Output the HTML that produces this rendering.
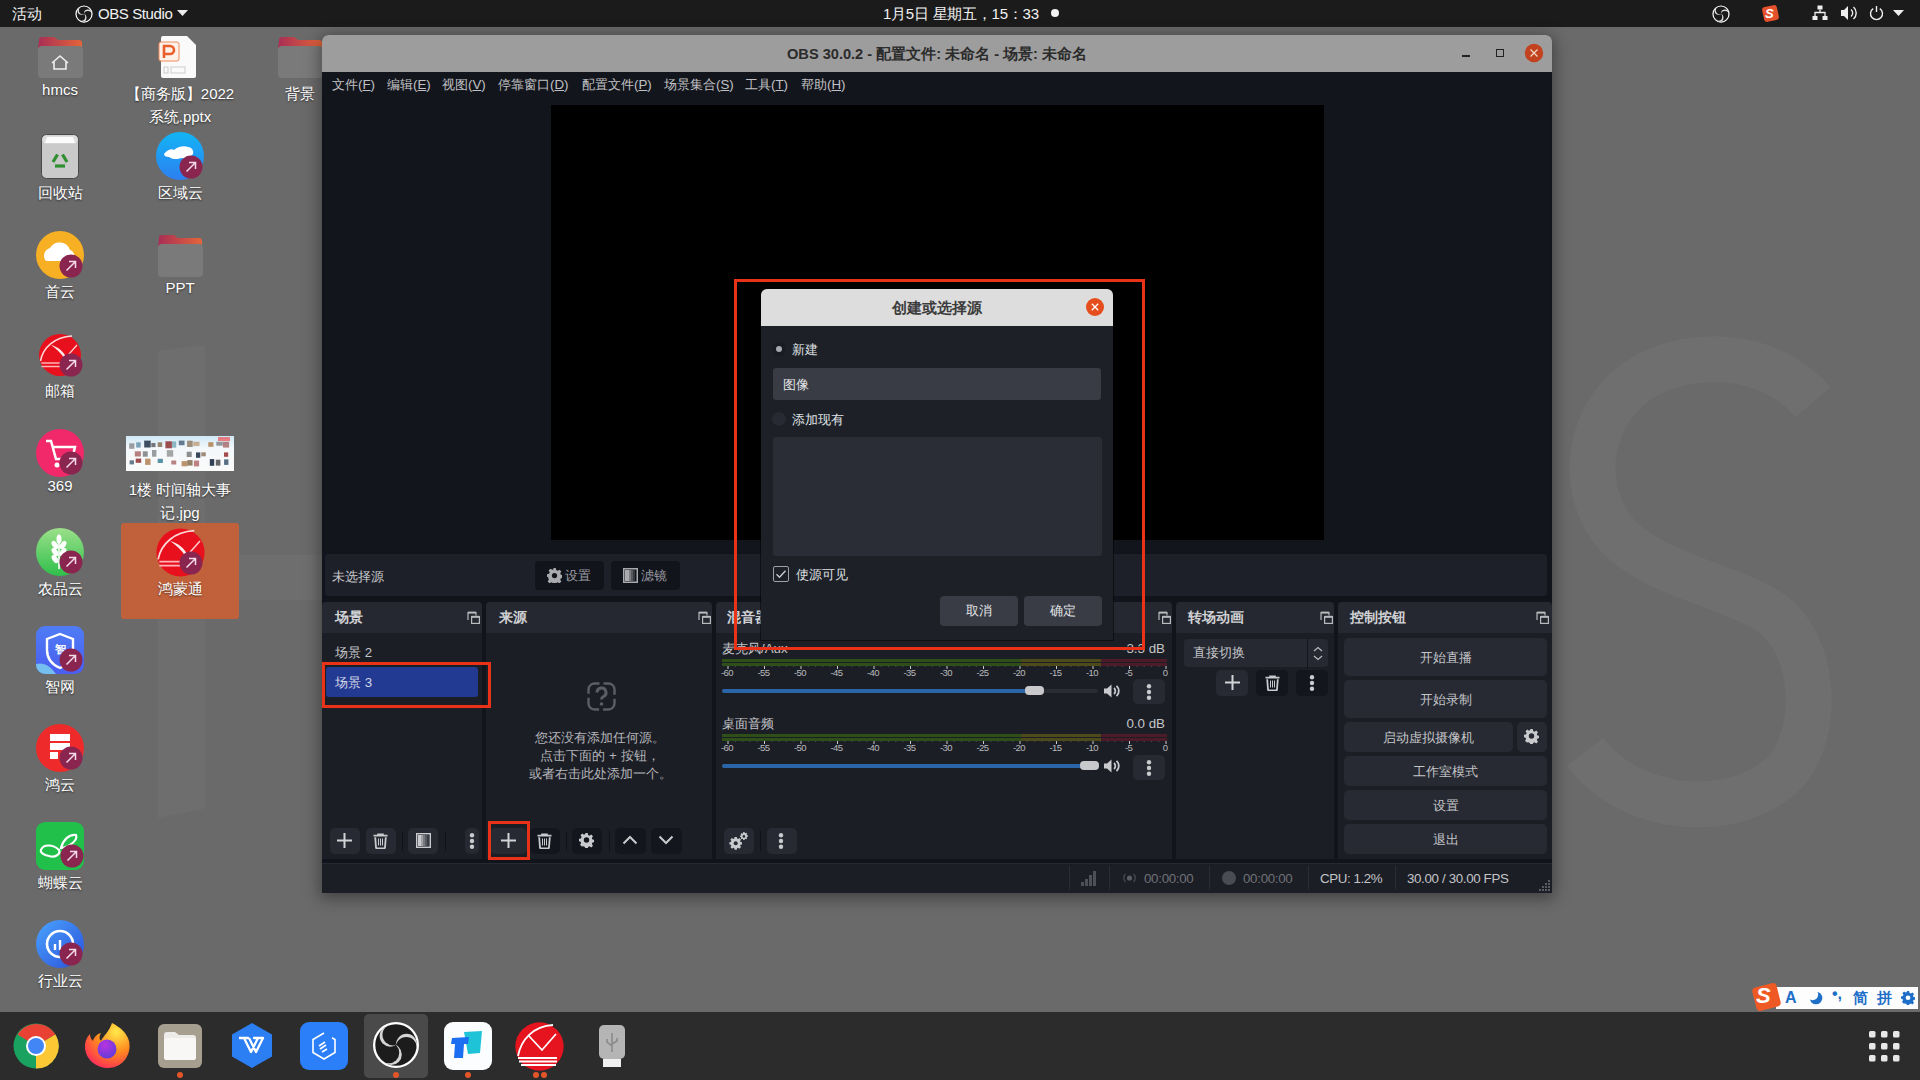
<!DOCTYPE html>
<html><head><meta charset="utf-8">
<style>
*{box-sizing:border-box;margin:0;padding:0}
html,body{width:1920px;height:1080px;overflow:hidden}
body{position:relative;background:#6a6a6a;font-family:"Liberation Sans",sans-serif;color:#fff}
.a{position:absolute}
.t{position:absolute;white-space:nowrap;line-height:1}
#top{left:0;top:0;width:1920px;height:27px;background:#1b1b1b}
.dl{position:absolute;white-space:nowrap;font-size:15px;line-height:23px;color:#fff;text-align:center;text-shadow:0 1px 2px rgba(0,0,0,.6)}
.ui{font-size:13.33px;color:#c9cacd}
.hdr{position:absolute;background:#252830}
.body{position:absolute;background:#1c1e26}
.btn{position:absolute;background:#282b34;border-radius:4px}
.rb{position:absolute;border:3px solid #e8321c}
u{text-decoration:underline;text-underline-offset:1px}
</style></head>
<body>
<!-- WALLPAPER LETTERS -->
<div class="a" style="left:158px;top:345px;width:47px;height:473px;background:#6e6e6e;clip-path:polygon(0 1.2%,100% 0,100% 98%,0 100%)"></div>
<div class="a" style="left:205px;top:555px;width:120px;height:45px;background:#6e6e6e"></div>
<svg class="a" style="left:1555px;top:330px" width="300" height="510" viewBox="0 0 300 510"><path d="M258 72 C215 22 140 20 92 45 C30 80 22 160 62 205 C97 243 170 255 212 280 C262 312 265 400 232 440 C185 490 80 487 30 422" fill="none" stroke="#6f6f6f" stroke-width="46"/></svg>

<!-- DESKTOP ICONS col1 -->
<svg class="a" style="left:37px;top:36px" width="46" height="42" viewBox="0 0 46 42"><defs><linearGradient id="fg" x1="0" x2="1"><stop offset="0" stop-color="#a82e55"/><stop offset="1" stop-color="#e3653a"/></linearGradient></defs><path d="M2 4a3 3 0 0 1 3-3h12l4 3h21a3 3 0 0 1 3 3v6H1z" fill="url(#fg)"/><rect x="1" y="10" width="45" height="32" rx="4" fill="#7a7a7a"/><path d="M15 27l8-7 8 7M17 25v8h12v-8" fill="none" stroke="#eee" stroke-width="1.6"/></svg>
<div class="dl" style="left:0;width:120px;top:78px">hmcs</div>

<svg class="a" style="left:41px;top:134px" width="38" height="45" viewBox="0 0 38 45"><rect x="0.5" y="0.5" width="37" height="44" rx="5" fill="#cacaca" stroke="#4a4a4a" stroke-width="1"/><rect x="1.5" y="1.5" width="35" height="8" rx="4" fill="#dedede"/><path d="M6 3h26l2 6H4z" fill="#fbfbfb"/><g fill="none" stroke="#2f8f2f" stroke-width="3.2" stroke-linejoin="round"><path d="M16.5 20.5l-4.5 7.5"/><path d="M21.5 20.5l4.5 7.5"/><path d="M14 32h10"/></g></svg>
<div class="dl" style="left:0;width:120px;top:181px">回收站</div>

<svg class="a" style="left:36px;top:231px" width="50" height="50" viewBox="0 0 50 50"><circle cx="24" cy="24" r="24" fill="#f7b024"/><path d="M10 30a8 8 0 0 1 4-13 11 11 0 0 1 20 2 6 6 0 0 1 1 11z" fill="#fff"/></svg>
<div class="dl" style="left:0;width:120px;top:280px">首云</div>

<svg class="a" style="left:36px;top:331px" width="48" height="48" viewBox="0 0 48 48"><circle cx="24" cy="24" r="21" fill="#e8101c"/><path d="M4.5 30C7 16 19 6 36 5" fill="none" stroke="#ffd9da" stroke-width="1.5"/><path d="M15 14C22 16 27 20 30.5 26.5L28.5 27.5C25 22 20.5 18 15 14z" fill="#ffe9e9"/><path d="M30 26.5L41 14" stroke="#ffd0d0" stroke-width="1.3"/><path d="M5.5 32h21M5.5 35.5h21" stroke="#ffb5b8" stroke-width="1.6"/></svg>
<div class="dl" style="left:0;width:120px;top:379px">邮箱</div>

<svg class="a" style="left:36px;top:429px" width="50" height="50" viewBox="0 0 50 50"><circle cx="24" cy="24" r="24" fill="#f1286a"/><path d="M10 12h5l5 18h16l3-12H17" fill="none" stroke="#fff" stroke-width="2.5"/><circle cx="21" cy="36" r="2.5" fill="#fff"/></svg>
<div class="dl" style="left:0;width:120px;top:474px">369</div>

<svg class="a" style="left:36px;top:528px" width="50" height="50" viewBox="0 0 50 50"><defs><linearGradient id="gg" x1="0" y1="0" x2="0" y2="1"><stop offset="0" stop-color="#9be08a"/><stop offset="1" stop-color="#2fbf4a"/></linearGradient></defs><circle cx="24" cy="24" r="24" fill="url(#gg)"/><g fill="#fff"><path d="M23 41V12" stroke="#fff" stroke-width="1.6"/><ellipse cx="23" cy="11" rx="2.5" ry="4.5"/><ellipse cx="19" cy="17" rx="2.6" ry="4.6" transform="rotate(-35 19 17)"/><ellipse cx="27" cy="17" rx="2.6" ry="4.6" transform="rotate(35 27 17)"/><ellipse cx="19" cy="24" rx="2.6" ry="4.6" transform="rotate(-35 19 24)"/><ellipse cx="27" cy="24" rx="2.6" ry="4.6" transform="rotate(35 27 24)"/><ellipse cx="19" cy="31" rx="2.6" ry="4.6" transform="rotate(-35 19 31)"/></g></svg>
<div class="dl" style="left:0;width:120px;top:577px">农品云</div>

<svg class="a" style="left:36px;top:626px" width="50" height="50" viewBox="0 0 50 50"><defs><linearGradient id="zw" x1="0" y1="0" x2="0" y2="1"><stop offset="0" stop-color="#4f7cf5"/><stop offset="1" stop-color="#4a5ef0"/></linearGradient></defs><rect x="0" y="0" width="48" height="48" rx="9" fill="url(#zw)"/><path d="M0 38c8-2 14 2 20 10H9a9 9 0 0 1-9-9z" fill="#7fd6f0" opacity=".8"/><path d="M24 8l13 5v11c0 9-6 15-13 18-7-3-13-9-13-18V13z" fill="none" stroke="#fff" stroke-width="2.4"/><text x="24" y="27" font-size="11" fill="#fff" text-anchor="middle" font-weight="bold">智</text></svg>
<div class="dl" style="left:0;width:120px;top:675px">智网</div>

<svg class="a" style="left:36px;top:724px" width="50" height="50" viewBox="0 0 50 50"><circle cx="24" cy="24" r="24" fill="#ef2a2a"/><rect x="14" y="10" width="20" height="7" fill="#fff"/><rect x="14" y="19" width="20" height="7" fill="#fff"/><rect x="14" y="28" width="8" height="7" fill="#fff"/></svg>
<div class="dl" style="left:0;width:120px;top:773px">鸿云</div>

<svg class="a" style="left:36px;top:822px" width="50" height="50" viewBox="0 0 50 50"><rect x="0" y="0" width="48" height="48" rx="9" fill="#20c04a"/><path d="M5 28c2-6 12-6 18 0 2 4-4 8-10 6-6-1-9-4-8-6zM25 26c2-8 8-14 15-13 2 5-6 12-15 13z" fill="none" stroke="#fff" stroke-width="2.2"/></svg>
<div class="dl" style="left:0;width:120px;top:871px">蝴蝶云</div>

<svg class="a" style="left:36px;top:920px" width="50" height="50" viewBox="0 0 50 50"><defs><linearGradient id="bg2" x1="0" y1="0" x2="1" y2="1"><stop offset="0" stop-color="#4aa4ff"/><stop offset="1" stop-color="#2a4fd8"/></linearGradient></defs><circle cx="24" cy="24" r="24" fill="url(#bg2)"/><circle cx="24" cy="24" r="13" fill="none" stroke="#fff" stroke-width="2.6"/><path d="M19 30v-6M24 30v-10M29 30v-4" stroke="#fff" stroke-width="2.4"/></svg>
<div class="dl" style="left:0;width:120px;top:969px">行业云</div>

<!-- col2 -->
<svg class="a" style="left:158px;top:36px" width="40" height="42" viewBox="0 0 40 42"><path d="M5 0h24l9 9v31a2 2 0 0 1-2 2H5a2 2 0 0 1-2-2V2a2 2 0 0 1 2-2z" fill="#fafafa"/><rect x="1" y="6" width="20" height="19" rx="2" fill="#fdf1ea" stroke="#f08a5a"/><path d="M6 22V10h6a4 4 0 0 1 0 8H7" fill="none" stroke="#e95f2a" stroke-width="2.6"/><rect x="6" y="31" width="4" height="6" fill="none" stroke="#ccc"/><rect x="13" y="31" width="14" height="6" fill="none" stroke="#ccc"/></svg>
<div class="dl" style="left:120px;width:120px;top:82px">【商务版】2022</div>
<div class="dl" style="left:120px;width:120px;top:105px">系统.pptx</div>

<svg class="a" style="left:156px;top:132px" width="50" height="50" viewBox="0 0 50 50"><defs><linearGradient id="bb" x1="0" y1="0" x2="0" y2="1"><stop offset="0" stop-color="#12b5f5"/><stop offset="1" stop-color="#2d7ff0"/></linearGradient></defs><circle cx="24" cy="24" r="24" fill="url(#bb)"/><path d="M8 22c3-4 8-6 10-4 3-3 10-5 14-3 4 0 6 4 5 7-3 4-8 5-12 4-4 2-10 1-12-1-3 0-5-1-5-3z" fill="#fff"/></svg>
<div class="dl" style="left:120px;width:120px;top:181px">区域云</div>

<svg class="a" style="left:157px;top:234px" width="46" height="43" viewBox="0 0 46 43"><path d="M2 4a3 3 0 0 1 3-3h12l4 3h21a3 3 0 0 1 3 3v6H1z" fill="url(#fg)"/><rect x="1" y="10" width="45" height="33" rx="4" fill="#7a7a7a"/></svg>
<div class="dl" style="left:120px;width:120px;top:276px">PPT</div>

<svg class="a" style="left:126px;top:436px" width="108" height="35" viewBox="0 0 108 35"><defs><linearGradient id="th" x1="0" y1="0" x2="0" y2="1"><stop offset="0" stop-color="#cfe8f6"/><stop offset=".35" stop-color="#f4f8fb"/><stop offset="1" stop-color="#fafafa"/></linearGradient></defs><rect width="108" height="35" fill="url(#th)"/><rect x="3.2" y="7.3" width="5.2" height="5.5" fill="#6a6a6a" fill-opacity="0.63"/><rect x="10.2" y="6.3" width="4.5" height="5.3" fill="#2a6a8a" fill-opacity="0.59"/><rect x="18.2" y="4.6" width="6.5" height="6.9" fill="#203048" fill-opacity="0.85"/><rect x="25.3" y="7.0" width="4.2" height="4.1" fill="#555" fill-opacity="0.79"/><rect x="31.7" y="6.3" width="4.5" height="4.7" fill="#7a6040" fill-opacity="0.75"/><rect x="39.4" y="5.3" width="6.5" height="7.0" fill="#8a2b2b" fill-opacity="0.83"/><rect x="46.0" y="5.4" width="4.2" height="6.3" fill="#4a8aa0" fill-opacity="0.59"/><rect x="52.8" y="4.6" width="5.7" height="4.6" fill="#36506a" fill-opacity="0.74"/><rect x="61.1" y="4.7" width="5.6" height="6.3" fill="#7a6040" fill-opacity="0.68"/><rect x="67.2" y="5.7" width="6.3" height="4.4" fill="#b08050" fill-opacity="0.59"/><rect x="82.3" y="6.2" width="5.1" height="4.6" fill="#b08050" fill-opacity="0.86"/><rect x="90.3" y="5.7" width="6.5" height="4.0" fill="#6a6a6a" fill-opacity="0.67"/><rect x="97.0" y="5.7" width="6.1" height="5.9" fill="#8a2b2b" fill-opacity="0.57"/><rect x="8.8" y="15.3" width="6.1" height="5.2" fill="#8a2b2b" fill-opacity="0.59"/><rect x="16.8" y="15.3" width="4.9" height="5.4" fill="#6a6a6a" fill-opacity="0.74"/><rect x="26.0" y="14.0" width="4.4" height="6.7" fill="#6a6a6a" fill-opacity="0.65"/><rect x="40.8" y="14.1" width="6.4" height="6.6" fill="#6a6a6a" fill-opacity="0.58"/><rect x="60.7" y="15.7" width="5.0" height="5.3" fill="#6a6a6a" fill-opacity="0.75"/><rect x="70.0" y="16.4" width="4.3" height="5.4" fill="#203048" fill-opacity="0.89"/><rect x="75.3" y="16.3" width="4.5" height="4.0" fill="#7a6040" fill-opacity="0.71"/><rect x="98.0" y="16.4" width="4.2" height="4.4" fill="#a04040" fill-opacity="0.94"/><rect x="3.6" y="24.3" width="4.4" height="4.1" fill="#36506a" fill-opacity="0.74"/><rect x="9.7" y="22.6" width="5.5" height="4.2" fill="#8a2b2b" fill-opacity="0.84"/><rect x="19.1" y="22.7" width="5.4" height="6.2" fill="#b08050" fill-opacity="0.84"/><rect x="31.7" y="22.8" width="5.2" height="4.2" fill="#4a8aa0" fill-opacity="0.93"/><rect x="45.3" y="24.5" width="4.9" height="4.0" fill="#8a2b2b" fill-opacity="0.58"/><rect x="55.6" y="25.1" width="5.8" height="5.2" fill="#b08050" fill-opacity="0.83"/><rect x="61.3" y="24.1" width="5.3" height="5.5" fill="#7a6040" fill-opacity="0.79"/><rect x="67.9" y="24.6" width="5.2" height="5.8" fill="#a04040" fill-opacity="0.65"/><rect x="83.8" y="23.1" width="4.4" height="6.7" fill="#203048" fill-opacity="0.92"/><rect x="89.8" y="23.7" width="4.6" height="5.9" fill="#555" fill-opacity="0.90"/><rect x="98.1" y="23.4" width="4.3" height="5.5" fill="#36506a" fill-opacity="0.83"/><rect x="92" y="1" width="12" height="4" fill="#e33" fill-opacity=".6"/></svg>
<div class="dl" style="left:120px;width:120px;top:478px">1楼 时间轴大事</div>
<div class="dl" style="left:120px;width:120px;top:501px">记.jpg</div>

<div class="a" style="left:121px;top:523px;width:118px;height:96px;background:#c1613b;border-radius:3px"></div>
<svg class="a" style="left:153px;top:525px" width="55" height="55" viewBox="0 0 48 48"><circle cx="24" cy="24" r="21" fill="#e8101c"/><path d="M4.5 30C7 16 19 6 36 5" fill="none" stroke="#ffd9da" stroke-width="1.5"/><path d="M15 14C22 16 27 20 30.5 26.5L28.5 27.5C25 22 20.5 18 15 14z" fill="#ffe9e9"/><path d="M30 26.5L41 14" stroke="#ffd0d0" stroke-width="1.3"/><path d="M5.5 32h21M5.5 35.5h21" stroke="#ffb5b8" stroke-width="1.6"/></svg>
<div class="dl" style="left:120px;width:120px;top:577px">鸿蒙通</div>

<!-- col3 背景 folder -->
<svg class="a" style="left:277px;top:36px" width="46" height="42" viewBox="0 0 46 42"><path d="M2 4a3 3 0 0 1 3-3h12l4 3h21a3 3 0 0 1 3 3v6H1z" fill="url(#fg)"/><rect x="1" y="10" width="45" height="32" rx="4" fill="#7a7a7a"/></svg>
<div class="dl" style="left:240px;width:120px;top:82px">背景</div>
<svg class="a" style="left:59px;top:254px" width="24" height="24" viewBox="0 0 24 24"><circle cx="12" cy="12" r="11.5" fill="#8a2550"/><path d="M7.5 16.5l9-9M10 7.5h6.5V14" fill="none" stroke="#f3dbe7" stroke-width="1.5"/></svg>
<svg class="a" style="left:59px;top:353px" width="24" height="24" viewBox="0 0 24 24"><circle cx="12" cy="12" r="11.5" fill="#8a2550"/><path d="M7.5 16.5l9-9M10 7.5h6.5V14" fill="none" stroke="#f3dbe7" stroke-width="1.5"/></svg>
<svg class="a" style="left:59px;top:451px" width="24" height="24" viewBox="0 0 24 24"><circle cx="12" cy="12" r="11.5" fill="#8a2550"/><path d="M7.5 16.5l9-9M10 7.5h6.5V14" fill="none" stroke="#f3dbe7" stroke-width="1.5"/></svg>
<svg class="a" style="left:59px;top:550px" width="24" height="24" viewBox="0 0 24 24"><circle cx="12" cy="12" r="11.5" fill="#8a2550"/><path d="M7.5 16.5l9-9M10 7.5h6.5V14" fill="none" stroke="#f3dbe7" stroke-width="1.5"/></svg>
<svg class="a" style="left:59px;top:648px" width="24" height="24" viewBox="0 0 24 24"><circle cx="12" cy="12" r="11.5" fill="#8a2550"/><path d="M7.5 16.5l9-9M10 7.5h6.5V14" fill="none" stroke="#f3dbe7" stroke-width="1.5"/></svg>
<svg class="a" style="left:59px;top:746px" width="24" height="24" viewBox="0 0 24 24"><circle cx="12" cy="12" r="11.5" fill="#8a2550"/><path d="M7.5 16.5l9-9M10 7.5h6.5V14" fill="none" stroke="#f3dbe7" stroke-width="1.5"/></svg>
<svg class="a" style="left:60px;top:844px" width="24" height="24" viewBox="0 0 24 24"><circle cx="12" cy="12" r="11.5" fill="#8a2550"/><path d="M7.5 16.5l9-9M10 7.5h6.5V14" fill="none" stroke="#f3dbe7" stroke-width="1.5"/></svg>
<svg class="a" style="left:59px;top:942px" width="24" height="24" viewBox="0 0 24 24"><circle cx="12" cy="12" r="11.5" fill="#8a2550"/><path d="M7.5 16.5l9-9M10 7.5h6.5V14" fill="none" stroke="#f3dbe7" stroke-width="1.5"/></svg>
<svg class="a" style="left:179px;top:155px" width="24" height="24" viewBox="0 0 24 24"><circle cx="12" cy="12" r="11.5" fill="#8a2550"/><path d="M7.5 16.5l9-9M10 7.5h6.5V14" fill="none" stroke="#f3dbe7" stroke-width="1.5"/></svg>
<svg class="a" style="left:179px;top:551px" width="24" height="24" viewBox="0 0 24 24"><circle cx="12" cy="12" r="11.5" fill="#8a2550"/><path d="M7.5 16.5l9-9M10 7.5h6.5V14" fill="none" stroke="#f3dbe7" stroke-width="1.5"/></svg><!-- TOP BAR -->
<div id="top" class="a">
  <div class="t" style="left:12px;top:6px;font-size:15px;color:#f2f2f2">活动</div>
  <svg class="a" style="left:75px;top:5px" width="18" height="18" viewBox="0 0 48 48"><defs><mask id="obt00"><rect width="48" height="48" fill="black"/><circle cx="17.47" cy="15.65" r="10.6" fill="white"/><circle cx="21.08" cy="13.81" r="10.6" fill="black"/></mask><mask id="obt01"><rect width="48" height="48" fill="black"/><circle cx="34.50" cy="22.52" r="10.6" fill="white"/><circle cx="34.29" cy="26.56" r="10.6" fill="black"/></mask><mask id="obt02"><rect width="48" height="48" fill="black"/><circle cx="20.03" cy="33.83" r="10.6" fill="white"/><circle cx="16.64" cy="31.63" r="10.6" fill="black"/></mask></defs><circle cx="24" cy="24" r="21.40" fill="#1b1b1b" stroke="#fff" stroke-width="3.20"/><rect width="48" height="48" fill="#dddddd" mask="url(#obt00)"/><rect width="48" height="48" fill="#dddddd" mask="url(#obt01)"/><rect width="48" height="48" fill="#dddddd" mask="url(#obt02)"/></svg>
  <div class="t" style="left:98px;top:6px;font-size:15px;color:#f2f2f2;letter-spacing:-0.4px">OBS Studio</div>
  <svg class="a" style="left:177px;top:10px" width="11" height="7"><path d="M0 0h11L5.5 6z" fill="#eee"/></svg>
  <div class="t" style="left:883px;top:6px;font-size:15px;color:#f2f2f2;letter-spacing:-0.25px">1月5日 星期五，15：33</div>
  <div class="a" style="left:1051px;top:9px;width:8px;height:8px;border-radius:50%;background:#f2f2f2"></div>
  <svg class="a" style="left:1712px;top:5px" width="18" height="18" viewBox="0 0 48 48"><defs><mask id="obt10"><rect width="48" height="48" fill="black"/><circle cx="17.47" cy="15.65" r="10.6" fill="white"/><circle cx="21.08" cy="13.81" r="10.6" fill="black"/></mask><mask id="obt11"><rect width="48" height="48" fill="black"/><circle cx="34.50" cy="22.52" r="10.6" fill="white"/><circle cx="34.29" cy="26.56" r="10.6" fill="black"/></mask><mask id="obt12"><rect width="48" height="48" fill="black"/><circle cx="20.03" cy="33.83" r="10.6" fill="white"/><circle cx="16.64" cy="31.63" r="10.6" fill="black"/></mask></defs><circle cx="24" cy="24" r="21.40" fill="#1b1b1b" stroke="#fff" stroke-width="3.20"/><rect width="48" height="48" fill="#dddddd" mask="url(#obt10)"/><rect width="48" height="48" fill="#dddddd" mask="url(#obt11)"/><rect width="48" height="48" fill="#dddddd" mask="url(#obt12)"/></svg>
  <div class="a" style="left:1763px;top:6px;width:15px;height:15px;background:#e5512b;border-radius:3px;transform:rotate(-12deg)"></div>
  <div class="t" style="left:1765px;top:7px;font-size:13px;font-weight:bold;color:#fff;font-style:italic">S</div>
  <svg class="a" style="left:1812px;top:5px" width="16" height="16" viewBox="0 0 16 16"><rect x="5.5" y="0.5" width="5" height="4" fill="#eee"/><rect x="0.5" y="11" width="5" height="4" fill="#eee"/><rect x="10.5" y="11" width="5" height="4" fill="#eee"/><path d="M8 4.5v3M3 11V7.5h10V11" stroke="#eee" stroke-width="1.3" fill="none"/></svg>
  <svg class="a" style="left:1840px;top:5px" width="18" height="16" viewBox="0 0 18 16"><path d="M1 5h3l4-4v14l-4-4H1z" fill="#eee"/><path d="M11 4.5a4.5 4.5 0 0 1 0 7M13.5 2a8 8 0 0 1 0 12" fill="none" stroke="#eee" stroke-width="1.4"/></svg>
  <svg class="a" style="left:1869px;top:5px" width="15" height="16" viewBox="0 0 15 16"><path d="M4.2 3.6a6 6 0 1 0 6.6 0" fill="none" stroke="#eee" stroke-width="1.4"/><path d="M7.5 1v6" stroke="#eee" stroke-width="1.4"/></svg>
  <svg class="a" style="left:1893px;top:10px" width="11" height="7"><path d="M0 0h11L5.5 6z" fill="#eee"/></svg>
</div>
<!-- OBS WINDOW -->
<div class="a" style="left:322px;top:35px;width:1230px;height:858px;background:#12141b;border-radius:6px 6px 0 0;overflow:hidden;box-shadow:0 3px 16px 2px rgba(0,0,0,.4)">
  <div class="a" style="left:0;top:0;width:1230px;height:37px;background:#9d9d9d"></div>
  <div class="t" style="left:0;width:1230px;text-align:center;top:12px;font-size:14.6px;font-weight:bold;color:#2b2b2b">OBS 30.0.2 - 配置文件: 未命名 - 场景: 未命名</div>
  <div class="a" style="left:1140px;top:20px;width:8px;height:1.6px;background:#222"></div>
  <div class="a" style="left:1174px;top:14px;width:8px;height:8px;border:1.6px solid #222"></div>
  <svg class="a" style="left:1201px;top:8px" width="22" height="22" viewBox="0 0 22 22"><circle cx="11" cy="10" r="9.2" fill="#c2421f"/><path d="M7.5 6.5l7 7M14.5 6.5l-7 7" stroke="#f3d8c8" stroke-width="1.2"/></svg>
  <!-- menu -->
  <div class="a ui" style="left:0;top:37px;width:1230px;height:24px;background:#13151c"></div>
  <div class="t ui" style="left:10px;top:43px;color:#c0c1c4">文件(<u>F</u>)</div>
  <div class="t ui" style="left:65px;top:43px;color:#c0c1c4">编辑(<u>E</u>)</div>
  <div class="t ui" style="left:120px;top:43px;color:#c0c1c4">视图(<u>V</u>)</div>
  <div class="t ui" style="left:176px;top:43px;color:#c0c1c4">停靠窗口(<u>D</u>)</div>
  <div class="t ui" style="left:260px;top:43px;color:#c0c1c4">配置文件(<u>P</u>)</div>
  <div class="t ui" style="left:342px;top:43px;color:#c0c1c4">场景集合(<u>S</u>)</div>
  <div class="t ui" style="left:423px;top:43px;color:#c0c1c4">工具(<u>T</u>)</div>
  <div class="t ui" style="left:479px;top:43px;color:#c0c1c4">帮助(<u>H</u>)</div>
  <!-- preview -->
  <div class="a" style="left:3px;top:61px;width:1224px;height:456px;background:#13151c"></div>
  <div class="a" style="left:229px;top:70px;width:773px;height:435px;background:#000"></div>
  <!-- source toolbar -->
  <div class="a" style="left:3px;top:519px;width:1222px;height:42px;background:#1d2028;border-radius:3px"></div>
  <div class="t ui" style="left:10px;top:535px">未选择源</div>
  <div class="a" style="left:213px;top:526px;width:69px;height:29px;background:#12141b;border-radius:4px"></div>
  <svg class="a" style="left:225px;top:533px" width="15" height="15" viewBox="0 0 16 16"><path d="M6.6 0h2.8l.4 2.2 1.6.8 1.9-1.2 2 2-1.2 1.9.7 1.6 2.2.4v2.8l-2.2.4-.7 1.6 1.2 1.9-2 2-1.9-1.2-1.6.7-.4 2.2H6.6l-.4-2.2-1.6-.7-1.9 1.2-2-2 1.2-1.9L1.2 9.8 0 9.4V6.6l2.2-.4.7-1.6L1.7 2.7l2-2 1.9 1.2 1.6-.7z" fill="#a9aaad"/><circle cx="8" cy="8" r="2.8" fill="#12141b"/></svg>
  <div class="t ui" style="left:243px;top:534px;color:#9a9ba0">设置</div>
  <div class="a" style="left:289px;top:526px;width:69px;height:29px;background:#12141b;border-radius:4px"></div>
  <svg class="a" style="left:301px;top:533px" width="15" height="15" viewBox="0 0 15 15"><rect x="0.75" y="0.75" width="13.5" height="13.5" fill="none" stroke="#a9aaad" stroke-width="1.5"/><rect x="2" y="2" width="4" height="11" fill="#a9aaad"/><rect x="6" y="2" width="2" height="11" fill="#a9aaad" opacity=".7"/><rect x="8" y="2" width="2" height="11" fill="#a9aaad" opacity=".45"/><rect x="10" y="2" width="2" height="11" fill="#a9aaad" opacity=".25"/></svg>
  <div class="t ui" style="left:319px;top:534px;color:#9a9ba0">滤镜</div>

  <!-- DOCKS -->
  <!-- scenes -->
  <div class="hdr" style="left:0;top:567px;width:160px;height:31px;border-radius:4px 4px 0 0"></div>
  <div class="body" style="left:0;top:598px;width:160px;height:226px"></div>
  <div class="t ui" style="left:13px;top:575px;font-weight:bold;font-size:14px;color:#d0d1d4">场景</div>
  <!-- sources -->
  <div class="hdr" style="left:164px;top:567px;width:226px;height:31px;border-radius:4px 4px 0 0"></div>
  <div class="body" style="left:164px;top:598px;width:226px;height:226px"></div>
  <div class="t ui" style="left:177px;top:575px;font-weight:bold;font-size:14px;color:#d0d1d4">来源</div>
  <!-- mixer -->
  <div class="hdr" style="left:394px;top:567px;width:456px;height:31px;border-radius:4px 4px 0 0"></div>
  <div class="body" style="left:394px;top:598px;width:456px;height:226px"></div>
  <div class="t ui" style="left:405px;top:575px;font-weight:bold;font-size:14px;color:#d0d1d4">混音器</div>
  <!-- transitions -->
  <div class="hdr" style="left:854px;top:567px;width:158px;height:31px;border-radius:4px 4px 0 0"></div>
  <div class="body" style="left:854px;top:598px;width:158px;height:226px"></div>
  <div class="t ui" style="left:866px;top:575px;font-weight:bold;font-size:14px;color:#d0d1d4">转场动画</div>
  <!-- controls -->
  <div class="hdr" style="left:1016px;top:567px;width:214px;height:31px;border-radius:4px 4px 0 0"></div>
  <div class="body" style="left:1016px;top:598px;width:214px;height:226px"></div>
  <div class="t ui" style="left:1028px;top:575px;font-weight:bold;font-size:14px;color:#d0d1d4">控制按钮</div>
  <!-- status bar -->
  <div class="a" style="left:0;top:828px;width:1230px;height:30px;background:#1c1e26;border-top:1px solid #262932"></div>
</div>
<svg class="a" style="left:467px;top:611px" width="13" height="13" viewBox="0 0 13 13"><path d="M1 9V1.5h8v3" fill="none" stroke="#b9babd" stroke-width="1.2"/><path d="M1 1.6h8" stroke="#b9babd" stroke-width="2"/><rect x="4.6" y="5.6" width="7.8" height="6.8" fill="none" stroke="#b9babd" stroke-width="1.2"/><path d="M4.6 5.8h7.8" stroke="#b9babd" stroke-width="2"/></svg>
<svg class="a" style="left:698px;top:611px" width="13" height="13" viewBox="0 0 13 13"><path d="M1 9V1.5h8v3" fill="none" stroke="#b9babd" stroke-width="1.2"/><path d="M1 1.6h8" stroke="#b9babd" stroke-width="2"/><rect x="4.6" y="5.6" width="7.8" height="6.8" fill="none" stroke="#b9babd" stroke-width="1.2"/><path d="M4.6 5.8h7.8" stroke="#b9babd" stroke-width="2"/></svg>
<svg class="a" style="left:1158px;top:611px" width="13" height="13" viewBox="0 0 13 13"><path d="M1 9V1.5h8v3" fill="none" stroke="#b9babd" stroke-width="1.2"/><path d="M1 1.6h8" stroke="#b9babd" stroke-width="2"/><rect x="4.6" y="5.6" width="7.8" height="6.8" fill="none" stroke="#b9babd" stroke-width="1.2"/><path d="M4.6 5.8h7.8" stroke="#b9babd" stroke-width="2"/></svg>
<svg class="a" style="left:1320px;top:611px" width="13" height="13" viewBox="0 0 13 13"><path d="M1 9V1.5h8v3" fill="none" stroke="#b9babd" stroke-width="1.2"/><path d="M1 1.6h8" stroke="#b9babd" stroke-width="2"/><rect x="4.6" y="5.6" width="7.8" height="6.8" fill="none" stroke="#b9babd" stroke-width="1.2"/><path d="M4.6 5.8h7.8" stroke="#b9babd" stroke-width="2"/></svg>
<svg class="a" style="left:1536px;top:611px" width="13" height="13" viewBox="0 0 13 13"><path d="M1 9V1.5h8v3" fill="none" stroke="#b9babd" stroke-width="1.2"/><path d="M1 1.6h8" stroke="#b9babd" stroke-width="2"/><rect x="4.6" y="5.6" width="7.8" height="6.8" fill="none" stroke="#b9babd" stroke-width="1.2"/><path d="M4.6 5.8h7.8" stroke="#b9babd" stroke-width="2"/></svg>
<div class="t ui" style="left:335px;top:646px;color:#c4c5c8">场景 2</div>
<div class="a" style="left:326px;top:667px;width:152px;height:30px;background:#233a93;border-radius:3px"></div>
<div class="t ui" style="left:335px;top:676px;color:#d3d6e6">场景 3</div>
<div class="a" style="left:330px;top:828px;width:30px;height:26px;background:#272a33;border-radius:5px"></div>
<svg class="a" style="left:337px;top:833px" width="15" height="15" viewBox="0 0 15 15"><path d="M7.5 0v15M0 7.5h15" stroke="#d2d3d6" stroke-width="2"/></svg>
<div class="a" style="left:366px;top:828px;width:30px;height:26px;background:#272a33;border-radius:5px"></div>
<svg class="a" style="left:373px;top:833px" width="15" height="16" viewBox="0 0 15 16"><path d="M0.5 2.6h14M5 2.4V1.2h5v1.2" stroke="#c9cacd" stroke-width="1.6" fill="none"/><path d="M2.2 4.2l.8 10.3a1.2 1.2 0 0 0 1.2 1h6.6a1.2 1.2 0 0 0 1.2-1l.8-10.3" stroke="#c9cacd" stroke-width="1.8" fill="none"/><path d="M5.5 5.5v7M7.5 5.5v7M9.5 5.5v7" stroke="#c9cacd" stroke-width="1"/></svg>
<div class="a" style="left:402px;top:831px;width:1px;height:20px;background:#101218"></div>
<div class="a" style="left:408px;top:828px;width:30px;height:26px;background:#272a33;border-radius:5px"></div>
<svg class="a" style="left:416px;top:833px" width="15" height="15" viewBox="0 0 15 15"><rect x="0.7" y="0.7" width="13.6" height="13.6" fill="none" stroke="#c9cacd" stroke-width="1.4"/><rect x="2" y="2" width="3" height="11" fill="#c9cacd"/><rect x="5" y="2" width="2" height="11" fill="#c9cacd" opacity=".75"/><rect x="7" y="2" width="2" height="11" fill="#c9cacd" opacity=".5"/><rect x="9" y="2" width="2" height="11" fill="#c9cacd" opacity=".3"/><rect x="11" y="2" width="2" height="11" fill="#c9cacd" opacity=".12"/></svg>
<div class="a" style="left:445px;top:831px;width:1px;height:20px;background:#101218"></div>
<div class="a" style="left:465px;top:828px;width:14px;height:26px;background:#272a33;border-radius:5px"></div>
<svg class="a" style="left:469px;top:833px" width="6" height="16" viewBox="0 0 6 16"><circle cx="3" cy="2.3" r="2.2" fill="#c9cacd"/><circle cx="3" cy="8" r="2.2" fill="#c9cacd"/><circle cx="3" cy="13.7" r="2.2" fill="#c9cacd"/></svg>
<svg class="a" style="left:587px;top:682px" width="29" height="29" viewBox="0 0 29 29"><rect x="1.5" y="1.5" width="26" height="26" rx="6" fill="none" stroke="#5b5e66" stroke-width="2.4" stroke-dasharray="19.4 4" stroke-dashoffset="14.4"/><path d="M10 10.5a4.5 4.5 0 1 1 6.5 4c-1.5.8-2 1.6-2 3" fill="none" stroke="#5b5e66" stroke-width="3"/><circle cx="14.5" cy="22" r="1.8" fill="#5b5e66"/></svg>
<div class="t ui" style="left:487px;width:226px;text-align:center;top:731px;color:#b4b5b9">您还没有添加任何源。</div>
<div class="t ui" style="left:487px;width:226px;text-align:center;top:749px;color:#b4b5b9">点击下面的 + 按钮，</div>
<div class="t ui" style="left:487px;width:226px;text-align:center;top:767px;color:#b4b5b9">或者右击此处添加一个。</div>
<div class="a" style="left:490px;top:828px;width:37px;height:26px;background:#272a33;border-radius:5px"></div>
<svg class="a" style="left:501px;top:833px" width="15" height="15" viewBox="0 0 15 15"><path d="M7.5 0v15M0 7.5h15" stroke="#d2d3d6" stroke-width="2"/></svg>
<div class="a" style="left:530px;top:828px;width:30px;height:26px;background:#14161d;border-radius:5px"></div>
<svg class="a" style="left:537px;top:833px" width="15" height="16" viewBox="0 0 15 16"><path d="M0.5 2.6h14M5 2.4V1.2h5v1.2" stroke="#c9cacd" stroke-width="1.6" fill="none"/><path d="M2.2 4.2l.8 10.3a1.2 1.2 0 0 0 1.2 1h6.6a1.2 1.2 0 0 0 1.2-1l.8-10.3" stroke="#c9cacd" stroke-width="1.8" fill="none"/><path d="M5.5 5.5v7M7.5 5.5v7M9.5 5.5v7" stroke="#c9cacd" stroke-width="1"/></svg>
<div class="a" style="left:566px;top:831px;width:1px;height:20px;background:#101218"></div>
<div class="a" style="left:572px;top:828px;width:30px;height:26px;background:#14161d;border-radius:5px"></div>
<svg class="a" style="left:579px;top:833px" width="15" height="15" viewBox="0 0 16 16"><path d="M6.7 0h2.6l.4 2.1 1.5.7 1.8-1.2 1.9 1.9-1.2 1.8.6 1.5 2.1.4v2.6l-2.1.4-.6 1.5 1.2 1.8-1.9 1.9-1.8-1.2-1.5.6-.4 2.2H6.7l-.4-2.2-1.5-.6L3 14.4l-1.9-1.9 1.2-1.8-.6-1.5L0 8.8V6.2l2.1-.4.7-1.5L1.6 2.5 3.5.6l1.8 1.2 1.5-.7z" fill="#c9cacd"/><circle cx="8" cy="7.5" r="2.9" fill="#14161d"/></svg>
<div class="a" style="left:609px;top:831px;width:1px;height:20px;background:#101218"></div>
<div class="a" style="left:615px;top:828px;width:31px;height:26px;background:#14161d;border-radius:5px"></div>
<svg class="a" style="left:622px;top:835px" width="16" height="10" viewBox="0 0 16 10"><path d="M1.5 8.5L8 2l6.5 6.5" fill="none" stroke="#c9cacd" stroke-width="2"/></svg>
<div class="a" style="left:651px;top:828px;width:31px;height:26px;background:#14161d;border-radius:5px"></div>
<svg class="a" style="left:658px;top:835px" width="16" height="10" viewBox="0 0 16 10"><path d="M1.5 1.5L8 8l6.5-6.5" fill="none" stroke="#c9cacd" stroke-width="2"/></svg>
<div class="t ui" style="left:722px;top:642px;color:#c4c5c8">麦克风/Aux</div>
<div class="t ui" style="left:1065px;width:100px;text-align:right;top:642px;color:#c4c5c8">-3.3 dB</div>
<div class="a" style="left:722px;top:659px;width:299px;height:3px;background:#2f4f18"></div>
<div class="a" style="left:1021px;top:659px;width:80px;height:3px;background:#4e4a19"></div>
<div class="a" style="left:1101px;top:659px;width:66px;height:3px;background:#4d1b28"></div>
<div class="a" style="left:722px;top:663px;width:299px;height:3px;background:#2f4f18"></div>
<div class="a" style="left:1021px;top:663px;width:80px;height:3px;background:#4e4a19"></div>
<div class="a" style="left:1101px;top:663px;width:66px;height:3px;background:#4d1b28"></div>
<svg class="a" style="left:727px;top:666px" width="440" height="4"><rect x="0.5" y="0" width="1" height="3" fill="#c8c9cc"/><rect x="7.8" y="0" width="1" height="1" fill="#4a4c53"/><rect x="15.1" y="0" width="1" height="1" fill="#4a4c53"/><rect x="22.4" y="0" width="1" height="1" fill="#4a4c53"/><rect x="29.7" y="0" width="1" height="1" fill="#4a4c53"/><rect x="37.0" y="0" width="1" height="3" fill="#c8c9cc"/><rect x="44.3" y="0" width="1" height="1" fill="#4a4c53"/><rect x="51.6" y="0" width="1" height="1" fill="#4a4c53"/><rect x="58.9" y="0" width="1" height="1" fill="#4a4c53"/><rect x="66.2" y="0" width="1" height="1" fill="#4a4c53"/><rect x="73.5" y="0" width="1" height="3" fill="#c8c9cc"/><rect x="80.8" y="0" width="1" height="1" fill="#4a4c53"/><rect x="88.1" y="0" width="1" height="1" fill="#4a4c53"/><rect x="95.4" y="0" width="1" height="1" fill="#4a4c53"/><rect x="102.7" y="0" width="1" height="1" fill="#4a4c53"/><rect x="110.0" y="0" width="1" height="3" fill="#c8c9cc"/><rect x="117.3" y="0" width="1" height="1" fill="#4a4c53"/><rect x="124.6" y="0" width="1" height="1" fill="#4a4c53"/><rect x="131.9" y="0" width="1" height="1" fill="#4a4c53"/><rect x="139.2" y="0" width="1" height="1" fill="#4a4c53"/><rect x="146.5" y="0" width="1" height="3" fill="#c8c9cc"/><rect x="153.8" y="0" width="1" height="1" fill="#4a4c53"/><rect x="161.1" y="0" width="1" height="1" fill="#4a4c53"/><rect x="168.4" y="0" width="1" height="1" fill="#4a4c53"/><rect x="175.7" y="0" width="1" height="1" fill="#4a4c53"/><rect x="183.0" y="0" width="1" height="3" fill="#c8c9cc"/><rect x="190.3" y="0" width="1" height="1" fill="#4a4c53"/><rect x="197.6" y="0" width="1" height="1" fill="#4a4c53"/><rect x="204.9" y="0" width="1" height="1" fill="#4a4c53"/><rect x="212.2" y="0" width="1" height="1" fill="#4a4c53"/><rect x="219.5" y="0" width="1" height="3" fill="#c8c9cc"/><rect x="226.8" y="0" width="1" height="1" fill="#4a4c53"/><rect x="234.1" y="0" width="1" height="1" fill="#4a4c53"/><rect x="241.4" y="0" width="1" height="1" fill="#4a4c53"/><rect x="248.7" y="0" width="1" height="1" fill="#4a4c53"/><rect x="256.0" y="0" width="1" height="3" fill="#c8c9cc"/><rect x="263.3" y="0" width="1" height="1" fill="#4a4c53"/><rect x="270.6" y="0" width="1" height="1" fill="#4a4c53"/><rect x="277.9" y="0" width="1" height="1" fill="#4a4c53"/><rect x="285.2" y="0" width="1" height="1" fill="#4a4c53"/><rect x="292.5" y="0" width="1" height="3" fill="#c8c9cc"/><rect x="299.8" y="0" width="1" height="1" fill="#4a4c53"/><rect x="307.1" y="0" width="1" height="1" fill="#4a4c53"/><rect x="314.4" y="0" width="1" height="1" fill="#4a4c53"/><rect x="321.7" y="0" width="1" height="1" fill="#4a4c53"/><rect x="329.0" y="0" width="1" height="3" fill="#c8c9cc"/><rect x="336.3" y="0" width="1" height="1" fill="#4a4c53"/><rect x="343.6" y="0" width="1" height="1" fill="#4a4c53"/><rect x="350.9" y="0" width="1" height="1" fill="#4a4c53"/><rect x="358.2" y="0" width="1" height="1" fill="#4a4c53"/><rect x="365.5" y="0" width="1" height="3" fill="#c8c9cc"/><rect x="372.8" y="0" width="1" height="1" fill="#4a4c53"/><rect x="380.1" y="0" width="1" height="1" fill="#4a4c53"/><rect x="387.4" y="0" width="1" height="1" fill="#4a4c53"/><rect x="394.7" y="0" width="1" height="1" fill="#4a4c53"/><rect x="402.0" y="0" width="1" height="3" fill="#c8c9cc"/><rect x="409.3" y="0" width="1" height="1" fill="#4a4c53"/><rect x="416.6" y="0" width="1" height="1" fill="#4a4c53"/><rect x="423.9" y="0" width="1" height="1" fill="#4a4c53"/><rect x="431.2" y="0" width="1" height="1" fill="#4a4c53"/><rect x="438.5" y="0" width="1" height="3" fill="#c8c9cc"/></svg>
<div class="t" style="left:707.0px;width:40px;text-align:center;top:668px;font-size:9.5px;color:#b9babd;letter-spacing:-0.6px">-60</div>
<div class="t" style="left:743.5px;width:40px;text-align:center;top:668px;font-size:9.5px;color:#b9babd;letter-spacing:-0.6px">-55</div>
<div class="t" style="left:780.0px;width:40px;text-align:center;top:668px;font-size:9.5px;color:#b9babd;letter-spacing:-0.6px">-50</div>
<div class="t" style="left:816.5px;width:40px;text-align:center;top:668px;font-size:9.5px;color:#b9babd;letter-spacing:-0.6px">-45</div>
<div class="t" style="left:853.0px;width:40px;text-align:center;top:668px;font-size:9.5px;color:#b9babd;letter-spacing:-0.6px">-40</div>
<div class="t" style="left:889.5px;width:40px;text-align:center;top:668px;font-size:9.5px;color:#b9babd;letter-spacing:-0.6px">-35</div>
<div class="t" style="left:926.0px;width:40px;text-align:center;top:668px;font-size:9.5px;color:#b9babd;letter-spacing:-0.6px">-30</div>
<div class="t" style="left:962.5px;width:40px;text-align:center;top:668px;font-size:9.5px;color:#b9babd;letter-spacing:-0.6px">-25</div>
<div class="t" style="left:999.0px;width:40px;text-align:center;top:668px;font-size:9.5px;color:#b9babd;letter-spacing:-0.6px">-20</div>
<div class="t" style="left:1035.5px;width:40px;text-align:center;top:668px;font-size:9.5px;color:#b9babd;letter-spacing:-0.6px">-15</div>
<div class="t" style="left:1072.0px;width:40px;text-align:center;top:668px;font-size:9.5px;color:#b9babd;letter-spacing:-0.6px">-10</div>
<div class="t" style="left:1108.5px;width:40px;text-align:center;top:668px;font-size:9.5px;color:#b9babd;letter-spacing:-0.6px">-5</div>
<div class="t" style="left:1145.0px;width:40px;text-align:center;top:668px;font-size:9.5px;color:#b9babd;letter-spacing:-0.6px">0</div>
<div class="a" style="left:722px;top:689px;width:376px;height:4px;background:#2a2c33;border-radius:2px"></div>
<div class="a" style="left:722px;top:689px;width:307px;height:4px;background:#2965a8;border-radius:2px"></div>
<div class="a" style="left:1025px;top:686px;width:19px;height:9px;background:#c9c9cb;border-radius:4px"></div>
<svg class="a" style="left:1103px;top:683px" width="18" height="16" viewBox="0 0 18 16"><path d="M1 5.5h3l4.5-4v13L4 10.5H1z" fill="#c9cacd"/><path d="M11 5a4 4 0 0 1 0 6M13.5 2.8a7 7 0 0 1 0 10.4" fill="none" stroke="#c9cacd" stroke-width="1.8"/></svg>
<div class="a" style="left:1133px;top:679px;width:32px;height:25px;background:#272a33;border-radius:5px"></div>
<svg class="a" style="left:1146px;top:684px" width="6" height="16" viewBox="0 0 6 16"><circle cx="3" cy="2.3" r="2.2" fill="#c9cacd"/><circle cx="3" cy="8" r="2.2" fill="#c9cacd"/><circle cx="3" cy="13.7" r="2.2" fill="#c9cacd"/></svg>
<div class="t ui" style="left:722px;top:717px;color:#c4c5c8">桌面音频</div>
<div class="t ui" style="left:1065px;width:100px;text-align:right;top:717px;color:#c4c5c8">0.0 dB</div>
<div class="a" style="left:722px;top:734px;width:299px;height:3px;background:#2f4f18"></div>
<div class="a" style="left:1021px;top:734px;width:80px;height:3px;background:#4e4a19"></div>
<div class="a" style="left:1101px;top:734px;width:66px;height:3px;background:#4d1b28"></div>
<div class="a" style="left:722px;top:738px;width:299px;height:3px;background:#2f4f18"></div>
<div class="a" style="left:1021px;top:738px;width:80px;height:3px;background:#4e4a19"></div>
<div class="a" style="left:1101px;top:738px;width:66px;height:3px;background:#4d1b28"></div>
<svg class="a" style="left:727px;top:741px" width="440" height="4"><rect x="0.5" y="0" width="1" height="3" fill="#c8c9cc"/><rect x="7.8" y="0" width="1" height="1" fill="#4a4c53"/><rect x="15.1" y="0" width="1" height="1" fill="#4a4c53"/><rect x="22.4" y="0" width="1" height="1" fill="#4a4c53"/><rect x="29.7" y="0" width="1" height="1" fill="#4a4c53"/><rect x="37.0" y="0" width="1" height="3" fill="#c8c9cc"/><rect x="44.3" y="0" width="1" height="1" fill="#4a4c53"/><rect x="51.6" y="0" width="1" height="1" fill="#4a4c53"/><rect x="58.9" y="0" width="1" height="1" fill="#4a4c53"/><rect x="66.2" y="0" width="1" height="1" fill="#4a4c53"/><rect x="73.5" y="0" width="1" height="3" fill="#c8c9cc"/><rect x="80.8" y="0" width="1" height="1" fill="#4a4c53"/><rect x="88.1" y="0" width="1" height="1" fill="#4a4c53"/><rect x="95.4" y="0" width="1" height="1" fill="#4a4c53"/><rect x="102.7" y="0" width="1" height="1" fill="#4a4c53"/><rect x="110.0" y="0" width="1" height="3" fill="#c8c9cc"/><rect x="117.3" y="0" width="1" height="1" fill="#4a4c53"/><rect x="124.6" y="0" width="1" height="1" fill="#4a4c53"/><rect x="131.9" y="0" width="1" height="1" fill="#4a4c53"/><rect x="139.2" y="0" width="1" height="1" fill="#4a4c53"/><rect x="146.5" y="0" width="1" height="3" fill="#c8c9cc"/><rect x="153.8" y="0" width="1" height="1" fill="#4a4c53"/><rect x="161.1" y="0" width="1" height="1" fill="#4a4c53"/><rect x="168.4" y="0" width="1" height="1" fill="#4a4c53"/><rect x="175.7" y="0" width="1" height="1" fill="#4a4c53"/><rect x="183.0" y="0" width="1" height="3" fill="#c8c9cc"/><rect x="190.3" y="0" width="1" height="1" fill="#4a4c53"/><rect x="197.6" y="0" width="1" height="1" fill="#4a4c53"/><rect x="204.9" y="0" width="1" height="1" fill="#4a4c53"/><rect x="212.2" y="0" width="1" height="1" fill="#4a4c53"/><rect x="219.5" y="0" width="1" height="3" fill="#c8c9cc"/><rect x="226.8" y="0" width="1" height="1" fill="#4a4c53"/><rect x="234.1" y="0" width="1" height="1" fill="#4a4c53"/><rect x="241.4" y="0" width="1" height="1" fill="#4a4c53"/><rect x="248.7" y="0" width="1" height="1" fill="#4a4c53"/><rect x="256.0" y="0" width="1" height="3" fill="#c8c9cc"/><rect x="263.3" y="0" width="1" height="1" fill="#4a4c53"/><rect x="270.6" y="0" width="1" height="1" fill="#4a4c53"/><rect x="277.9" y="0" width="1" height="1" fill="#4a4c53"/><rect x="285.2" y="0" width="1" height="1" fill="#4a4c53"/><rect x="292.5" y="0" width="1" height="3" fill="#c8c9cc"/><rect x="299.8" y="0" width="1" height="1" fill="#4a4c53"/><rect x="307.1" y="0" width="1" height="1" fill="#4a4c53"/><rect x="314.4" y="0" width="1" height="1" fill="#4a4c53"/><rect x="321.7" y="0" width="1" height="1" fill="#4a4c53"/><rect x="329.0" y="0" width="1" height="3" fill="#c8c9cc"/><rect x="336.3" y="0" width="1" height="1" fill="#4a4c53"/><rect x="343.6" y="0" width="1" height="1" fill="#4a4c53"/><rect x="350.9" y="0" width="1" height="1" fill="#4a4c53"/><rect x="358.2" y="0" width="1" height="1" fill="#4a4c53"/><rect x="365.5" y="0" width="1" height="3" fill="#c8c9cc"/><rect x="372.8" y="0" width="1" height="1" fill="#4a4c53"/><rect x="380.1" y="0" width="1" height="1" fill="#4a4c53"/><rect x="387.4" y="0" width="1" height="1" fill="#4a4c53"/><rect x="394.7" y="0" width="1" height="1" fill="#4a4c53"/><rect x="402.0" y="0" width="1" height="3" fill="#c8c9cc"/><rect x="409.3" y="0" width="1" height="1" fill="#4a4c53"/><rect x="416.6" y="0" width="1" height="1" fill="#4a4c53"/><rect x="423.9" y="0" width="1" height="1" fill="#4a4c53"/><rect x="431.2" y="0" width="1" height="1" fill="#4a4c53"/><rect x="438.5" y="0" width="1" height="3" fill="#c8c9cc"/></svg>
<div class="t" style="left:707.0px;width:40px;text-align:center;top:743px;font-size:9.5px;color:#b9babd;letter-spacing:-0.6px">-60</div>
<div class="t" style="left:743.5px;width:40px;text-align:center;top:743px;font-size:9.5px;color:#b9babd;letter-spacing:-0.6px">-55</div>
<div class="t" style="left:780.0px;width:40px;text-align:center;top:743px;font-size:9.5px;color:#b9babd;letter-spacing:-0.6px">-50</div>
<div class="t" style="left:816.5px;width:40px;text-align:center;top:743px;font-size:9.5px;color:#b9babd;letter-spacing:-0.6px">-45</div>
<div class="t" style="left:853.0px;width:40px;text-align:center;top:743px;font-size:9.5px;color:#b9babd;letter-spacing:-0.6px">-40</div>
<div class="t" style="left:889.5px;width:40px;text-align:center;top:743px;font-size:9.5px;color:#b9babd;letter-spacing:-0.6px">-35</div>
<div class="t" style="left:926.0px;width:40px;text-align:center;top:743px;font-size:9.5px;color:#b9babd;letter-spacing:-0.6px">-30</div>
<div class="t" style="left:962.5px;width:40px;text-align:center;top:743px;font-size:9.5px;color:#b9babd;letter-spacing:-0.6px">-25</div>
<div class="t" style="left:999.0px;width:40px;text-align:center;top:743px;font-size:9.5px;color:#b9babd;letter-spacing:-0.6px">-20</div>
<div class="t" style="left:1035.5px;width:40px;text-align:center;top:743px;font-size:9.5px;color:#b9babd;letter-spacing:-0.6px">-15</div>
<div class="t" style="left:1072.0px;width:40px;text-align:center;top:743px;font-size:9.5px;color:#b9babd;letter-spacing:-0.6px">-10</div>
<div class="t" style="left:1108.5px;width:40px;text-align:center;top:743px;font-size:9.5px;color:#b9babd;letter-spacing:-0.6px">-5</div>
<div class="t" style="left:1145.0px;width:40px;text-align:center;top:743px;font-size:9.5px;color:#b9babd;letter-spacing:-0.6px">0</div>
<div class="a" style="left:722px;top:764px;width:376px;height:4px;background:#2a2c33;border-radius:2px"></div>
<div class="a" style="left:722px;top:764px;width:362px;height:4px;background:#2965a8;border-radius:2px"></div>
<div class="a" style="left:1080px;top:761px;width:19px;height:9px;background:#c9c9cb;border-radius:4px"></div>
<svg class="a" style="left:1103px;top:758px" width="18" height="16" viewBox="0 0 18 16"><path d="M1 5.5h3l4.5-4v13L4 10.5H1z" fill="#c9cacd"/><path d="M11 5a4 4 0 0 1 0 6M13.5 2.8a7 7 0 0 1 0 10.4" fill="none" stroke="#c9cacd" stroke-width="1.8"/></svg>
<div class="a" style="left:1133px;top:755px;width:32px;height:25px;background:#272a33;border-radius:5px"></div>
<svg class="a" style="left:1146px;top:760px" width="6" height="16" viewBox="0 0 6 16"><circle cx="3" cy="2.3" r="2.2" fill="#c9cacd"/><circle cx="3" cy="8" r="2.2" fill="#c9cacd"/><circle cx="3" cy="13.7" r="2.2" fill="#c9cacd"/></svg>
<div class="a" style="left:724px;top:828px;width:30px;height:26px;background:#272a33;border-radius:5px"></div>
<svg class="a" style="left:729px;top:832px" width="20" height="18" viewBox="0 0 20 18"><g fill="#c9cacd"><path d="M5.6 5h2.2l.3 1.5 1 .5 1.3-.9 1.6 1.6-.9 1.3.4 1 1.5.3v2.2l-1.5.3-.4 1 .9 1.3-1.6 1.6-1.3-.9-1 .4-.3 1.5H5.6l-.3-1.5-1-.4-1.3.9L1.4 15l.9-1.3-.4-1L.4 12.4v-2.2l1.5-.3.4-1-.9-1.3L3 6l1.3.9 1-.5z"/><path d="M14.2 0h1.4l.2 1 .6.3.8-.6 1 1-.6.8.3.6 1 .2v1.4l-1 .2-.3.6.6.8-1 1-.8-.6-.6.3-.2 1h-1.4l-.2-1-.6-.3-.8.6-1-1 .6-.8-.3-.6-1-.2V3.7l1-.2.3-.6-.6-.8 1-1 .8.6.6-.3z"/></g><circle cx="6.7" cy="11.3" r="2" fill="#272a33"/><circle cx="14.9" cy="4.4" r="1.3" fill="#272a33"/></svg>
<div class="a" style="left:760px;top:831px;width:1px;height:20px;background:#101218"></div>
<div class="a" style="left:767px;top:828px;width:30px;height:26px;background:#272a33;border-radius:5px"></div>
<svg class="a" style="left:778px;top:833px" width="6" height="16" viewBox="0 0 6 16"><circle cx="3" cy="2.3" r="2.2" fill="#c9cacd"/><circle cx="3" cy="8" r="2.2" fill="#c9cacd"/><circle cx="3" cy="13.7" r="2.2" fill="#c9cacd"/></svg>
<div class="a" style="left:1184px;top:639px;width:144px;height:28px;background:#262932;border-radius:4px"></div>
<div class="a" style="left:1307px;top:639px;width:1px;height:30px;background:#14161d"></div>
<div class="t ui" style="left:1193px;top:646px;color:#c4c5c8">直接切换</div>
<svg class="a" style="left:1312px;top:646px" width="12" height="15" viewBox="0 0 12 15"><path d="M2 5l4-3.5L10 5M2 10l4 3.5 4-3.5" fill="none" stroke="#b9babd" stroke-width="1.2"/></svg>
<div class="a" style="left:1216px;top:670px;width:32px;height:26px;background:#272a33;border-radius:5px"></div>
<svg class="a" style="left:1225px;top:675px" width="15" height="15" viewBox="0 0 15 15"><path d="M7.5 0v15M0 7.5h15" stroke="#d2d3d6" stroke-width="2"/></svg>
<div class="a" style="left:1256px;top:670px;width:32px;height:26px;background:#14161d;border-radius:5px"></div>
<svg class="a" style="left:1265px;top:675px" width="15" height="16" viewBox="0 0 15 16"><path d="M0.5 2.6h14M5 2.4V1.2h5v1.2" stroke="#c9cacd" stroke-width="1.6" fill="none"/><path d="M2.2 4.2l.8 10.3a1.2 1.2 0 0 0 1.2 1h6.6a1.2 1.2 0 0 0 1.2-1l.8-10.3" stroke="#c9cacd" stroke-width="1.8" fill="none"/><path d="M5.5 5.5v7M7.5 5.5v7M9.5 5.5v7" stroke="#c9cacd" stroke-width="1"/></svg>
<div class="a" style="left:1296px;top:670px;width:32px;height:26px;background:#14161d;border-radius:5px"></div>
<svg class="a" style="left:1309px;top:675px" width="6" height="16" viewBox="0 0 6 16"><circle cx="3" cy="2.3" r="2.2" fill="#c9cacd"/><circle cx="3" cy="8" r="2.2" fill="#c9cacd"/><circle cx="3" cy="13.7" r="2.2" fill="#c9cacd"/></svg>
<div class="a" style="left:1344px;top:638px;width:203px;height:38px;background:#272a33;border-radius:5px"></div>
<div class="t ui" style="left:1344px;width:203px;text-align:center;top:651px;color:#c4c5c8">开始直播</div>
<div class="a" style="left:1344px;top:680px;width:203px;height:38px;background:#272a33;border-radius:5px"></div>
<div class="t ui" style="left:1344px;width:203px;text-align:center;top:693px;color:#c4c5c8">开始录制</div>
<div class="a" style="left:1344px;top:722px;width:169px;height:30px;background:#272a33;border-radius:5px"></div>
<div class="t ui" style="left:1344px;width:169px;text-align:center;top:731px;color:#c4c5c8">启动虚拟摄像机</div>
<div class="a" style="left:1517px;top:722px;width:30px;height:30px;background:#272a33;border-radius:5px"></div>
<svg class="a" style="left:1524px;top:729px" width="15" height="15" viewBox="0 0 16 16"><path d="M6.7 0h2.6l.4 2.1 1.5.7 1.8-1.2 1.9 1.9-1.2 1.8.6 1.5 2.1.4v2.6l-2.1.4-.6 1.5 1.2 1.8-1.9 1.9-1.8-1.2-1.5.6-.4 2.2H6.7l-.4-2.2-1.5-.6L3 14.4l-1.9-1.9 1.2-1.8-.6-1.5L0 8.8V6.2l2.1-.4.7-1.5L1.6 2.5 3.5.6l1.8 1.2 1.5-.7z" fill="#c9cacd"/><circle cx="8" cy="7.5" r="2.9" fill="#272a33"/></svg>
<div class="a" style="left:1344px;top:756px;width:203px;height:30px;background:#272a33;border-radius:5px"></div>
<div class="t ui" style="left:1344px;width:203px;text-align:center;top:765px;color:#c4c5c8">工作室模式</div>
<div class="a" style="left:1344px;top:790px;width:203px;height:30px;background:#272a33;border-radius:5px"></div>
<div class="t ui" style="left:1344px;width:203px;text-align:center;top:799px;color:#c4c5c8">设置</div>
<div class="a" style="left:1344px;top:824px;width:203px;height:30px;background:#272a33;border-radius:5px"></div>
<div class="t ui" style="left:1344px;width:203px;text-align:center;top:833px;color:#c4c5c8">退出</div>
<div class="a" style="left:1069px;top:866px;width:1px;height:24px;background:#2a2d35"></div>
<div class="a" style="left:1109px;top:866px;width:1px;height:24px;background:#2a2d35"></div>
<div class="a" style="left:1209px;top:866px;width:1px;height:24px;background:#2a2d35"></div>
<div class="a" style="left:1308px;top:866px;width:1px;height:24px;background:#2a2d35"></div>
<div class="a" style="left:1395px;top:866px;width:1px;height:24px;background:#2a2d35"></div>
<svg class="a" style="left:1081px;top:871px" width="16" height="15" viewBox="0 0 16 15"><rect x="0" y="11" width="3" height="4" fill="#4e5057"/><rect x="4" y="8" width="3" height="7" fill="#4e5057"/><rect x="8" y="4" width="3" height="11" fill="#4e5057"/><rect x="12" y="0" width="3" height="15" fill="#4e5057"/></svg>
<svg class="a" style="left:1122px;top:871px" width="15" height="14" viewBox="0 0 15 14"><circle cx="7.5" cy="7" r="2.6" fill="#5a5c63"/><path d="M3.5 3a5.5 5.5 0 0 0 0 8M11.5 3a5.5 5.5 0 0 1 0 8" fill="none" stroke="#4a4c53" stroke-width="1.2"/></svg>
<div class="t ui" style="left:1144px;top:872px;color:#6f7176;letter-spacing:-0.3px">00:00:00</div>
<div class="a" style="left:1222px;top:871px;width:14px;height:14px;border-radius:50%;background:#4a4c53"></div>
<div class="t ui" style="left:1243px;top:872px;color:#6f7176;letter-spacing:-0.3px">00:00:00</div>
<div class="t ui" style="left:1320px;top:872px;color:#c4c5c8;letter-spacing:-0.4px">CPU: 1.2%</div>
<div class="t ui" style="left:1407px;top:872px;color:#c4c5c8;letter-spacing:-0.35px">30.00 / 30.00 FPS</div>
<svg class="a" style="left:1539px;top:880px" width="12" height="12" viewBox="0 0 12 12"><g fill="#5a5c63"><rect x="9" y="0" width="2" height="2"/><rect x="6" y="3" width="2" height="2"/><rect x="9" y="3" width="2" height="2"/><rect x="3" y="6" width="2" height="2"/><rect x="6" y="6" width="2" height="2"/><rect x="9" y="6" width="2" height="2"/><rect x="0" y="9" width="2" height="2"/><rect x="3" y="9" width="2" height="2"/><rect x="6" y="9" width="2" height="2"/><rect x="9" y="9" width="2" height="2"/></g></svg><!-- DIALOG -->
<div class="a" style="left:761px;top:289px;width:352px;height:351px;background:#1e2028;border-radius:6px 6px 0 0;overflow:hidden;box-shadow:0 0 0 1px rgba(0,0,0,.5)">
  <div class="a" style="left:0;top:0;width:352px;height:37px;background:#dddddd"></div>
  <div class="t" style="left:0;width:352px;text-align:center;top:11px;font-size:15px;font-weight:bold;color:#3c3c3c">创建或选择源</div>
  <svg class="a" style="left:324px;top:8px" width="20" height="20" viewBox="0 0 20 20"><circle cx="10" cy="10" r="9" fill="#e64d1d"/><path d="M6.8 6.8l6.4 6.4M13.2 6.8l-6.4 6.4" stroke="#fff" stroke-width="1.3"/></svg>
  <!-- radio new -->
  <div class="a" style="left:11px;top:53px;width:14px;height:14px;border-radius:50%;background:#1a1c23"></div>
  <div class="a" style="left:15px;top:57px;width:6px;height:6px;border-radius:50%;background:#a8a9ad"></div>
  <div class="t ui" style="left:31px;top:54px;color:#dfe0e2">新建</div>
  <div class="a" style="left:12px;top:79px;width:328px;height:32px;background:#393c45;border-radius:3px"></div>
  <div class="t ui" style="left:22px;top:89px;color:#e3e4e6">图像</div>
  <!-- radio existing -->
  <div class="a" style="left:11px;top:123px;width:14px;height:14px;border-radius:50%;background:#272a32"></div>
  <div class="t ui" style="left:31px;top:124px;color:#dfe0e2">添加现有</div>
  <div class="a" style="left:12px;top:148px;width:329px;height:119px;background:#2a2d36;border-radius:3px"></div>
  <!-- checkbox -->
  <div class="a" style="left:12px;top:277px;width:16px;height:16px;border:1.3px solid #a0a1a5;border-radius:2px"></div>
  <svg class="a" style="left:12px;top:277px" width="16" height="16" viewBox="0 0 16 16"><path d="M3.5 8.2l3 3 6-6.5" fill="none" stroke="#c8c9cc" stroke-width="1.4"/></svg>
  <div class="t ui" style="left:35px;top:279px;color:#dfe0e2">使源可见</div>
  <!-- buttons -->
  <div class="a" style="left:179px;top:307px;width:78px;height:30px;background:#393c45;border-radius:4px"></div>
  <div class="t ui" style="left:179px;width:78px;text-align:center;top:315px;color:#e3e4e6">取消</div>
  <div class="a" style="left:263px;top:307px;width:78px;height:30px;background:#393c45;border-radius:4px"></div>
  <div class="t ui" style="left:263px;width:78px;text-align:center;top:315px;color:#e3e4e6">确定</div>
</div>
<!-- DOCK -->
<div class="a" style="left:0;top:1012px;width:1920px;height:68px;background:#2c2c2c"></div>
<!-- chrome -->
<svg class="a" style="left:13px;top:1023px" width="46" height="46" viewBox="0 0 46 46">
 <circle cx="23" cy="23" r="22.5" fill="#1aa260"/>
 <path d="M23 23L4.5 11.5A22.5 22.5 0 0 1 42.5 11.5z" fill="#e94235"/>
 <path d="M23 23L42.5 11.5A22.5 22.5 0 0 1 23 45.5z" fill="#fcc934"/>
 <path d="M23 13.5h19.5M15 28.2L5.3 11.5M31 28.2L21.5 45" stroke="none"/>
 <circle cx="23" cy="23" r="10" fill="#fff"/><circle cx="23" cy="23" r="8" fill="#4285f4"/>
</svg>
<!-- firefox -->
<svg class="a" style="left:85px;top:1022px" width="46" height="47" viewBox="0 0 46 47">
 <defs><radialGradient id="ff" cx="0.7" cy="0.2" r="1"><stop offset="0" stop-color="#ffe94a"/><stop offset=".45" stop-color="#ff8a1e"/><stop offset=".8" stop-color="#ff3d4d"/><stop offset="1" stop-color="#e31587"/></radialGradient><radialGradient id="fp" cx=".4" cy=".3" r=".8"><stop offset="0" stop-color="#b833e1"/><stop offset="1" stop-color="#5a3ed8"/></radialGradient></defs>
 <path d="M27 1c8 4 15 10 17 18 3 13-6 27-21 27C10 46 0 36 0 25c0-6 2-10 5-13 0 3 1 5 3 7 1-4 4-7 8-8-2 3-2 6 0 8 3-6 8-9 11-18z" fill="url(#ff)"/>
 <circle cx="22" cy="27" r="9.5" fill="url(#fp)"/>
</svg>
<!-- files -->
<div class="a" style="left:158px;top:1024px;width:44px;height:44px;background:#a69f8f;border-radius:6px"></div>
<svg class="a" style="left:164px;top:1032px" width="32" height="28" viewBox="0 0 32 28"><path d="M0 3a3 3 0 0 1 3-3h8l4 3h14a3 3 0 0 1 3 3v19a3 3 0 0 1-3 3H3a3 3 0 0 1-3-3z" fill="#eeece8"/><rect x="0" y="6" width="32" height="22" rx="3" fill="#f8f7f5"/></svg>
<div class="a" style="left:177px;top:1072px;width:6px;height:6px;border-radius:50%;background:#e5552a"></div>
<!-- wps -->
<svg class="a" style="left:231px;top:1023px" width="42" height="45" viewBox="0 0 42 45"><path d="M21 0l20 11.5v22L21 45 1 33.5v-22z" fill="#2b7ff2"/><path d="M8 15h9l-4 0 7 14 7-14h-4 9l-7 14-7-14" fill="none" stroke="#fff" stroke-width="2.3" stroke-linejoin="round"/></svg>
<!-- blue app -->
<div class="a" style="left:300px;top:1022px;width:48px;height:48px;background:#2b7ff8;border-radius:9px"></div>
<svg class="a" style="left:311px;top:1031px" width="26" height="30" viewBox="0 0 26 30"><path d="M13 2L2 8.5v13L13 28l11-6.5v-13l-3-1.8M16 3.5" fill="none" stroke="#fff" stroke-width="1.6"/><path d="M8 15l6-4M9 18l6-4M11 21l5-3" stroke="#fff" stroke-width="1.6"/></svg>
<!-- obs active -->
<div class="a" style="left:364px;top:1014px;width:64px;height:64px;background:#4a4a4a;border-radius:5px"></div>
<svg class="a" style="left:372px;top:1021px" width="48" height="48" viewBox="0 0 48 48"><defs><mask id="obd0"><rect width="48" height="48" fill="black"/><circle cx="18.23" cy="15.11" r="10.6" fill="white"/><circle cx="21.08" cy="13.81" r="10.6" fill="black"/></mask><mask id="obd1"><rect width="48" height="48" fill="black"/><circle cx="34.59" cy="23.45" r="10.6" fill="white"/><circle cx="34.29" cy="26.56" r="10.6" fill="black"/></mask><mask id="obd2"><rect width="48" height="48" fill="black"/><circle cx="19.19" cy="33.44" r="10.6" fill="white"/><circle cx="16.64" cy="31.63" r="10.6" fill="black"/></mask></defs><circle cx="24" cy="24" r="21.85" fill="#1c1c1c" stroke="#fff" stroke-width="2.30"/><rect width="48" height="48" fill="#d4d4d4" mask="url(#obd0)"/><rect width="48" height="48" fill="#d4d4d4" mask="url(#obd1)"/><rect width="48" height="48" fill="#d4d4d4" mask="url(#obd2)"/></svg>
<div class="a" style="left:393px;top:1072px;width:6px;height:6px;border-radius:50%;background:#e5552a"></div>
<!-- todesk -->
<div class="a" style="left:444px;top:1022px;width:48px;height:48px;background:#fbfdff;border-radius:9px"></div>
<svg class="a" style="left:450px;top:1030px" width="36" height="32" viewBox="0 0 36 32"><path d="M14 2l18-1-2 22-12 1z" fill="#1ec3d8"/><path d="M2 8l17-1-1 7-4 0-1 14-9 0 1-14H1z" fill="#1b6ff0"/></svg>
<div class="a" style="left:465px;top:1072px;width:6px;height:6px;border-radius:50%;background:#e5552a"></div>
<!-- red app -->
<svg class="a" style="left:515px;top:1022px" width="49" height="49" viewBox="0 0 49 49"><circle cx="24.5" cy="24.5" r="24.2" fill="#e5141e"/><path d="M3 34C6 18 18 4 38 3M14 14l13 14 14-16M3 36h39M4 39.5h38M6 43h35" fill="none" stroke="#fff" stroke-width="1.8"/></svg>
<div class="a" style="left:533px;top:1072px;width:6px;height:6px;border-radius:50%;background:#e5552a"></div>
<div class="a" style="left:541px;top:1072px;width:6px;height:6px;border-radius:50%;background:#e5552a"></div>
<!-- usb -->
<div class="a" style="left:599px;top:1025px;width:26px;height:34px;background:#b5b5b5;border-radius:5px"></div>
<div class="a" style="left:603px;top:1059px;width:18px;height:8px;background:#f0f0f0"></div>
<svg class="a" style="left:604px;top:1032px" width="16" height="22" viewBox="0 0 16 22"><path d="M8 1v19M8 14l-5-4V7M8 12l5-3V6" fill="none" stroke="#8a8a8a" stroke-width="1.6"/></svg>
<!-- app grid -->
<svg class="a" style="left:1868px;top:1030px" width="32" height="32" viewBox="0 0 32 32"><g fill="#e8e8e8">
<rect x="1" y="1" width="6.5" height="6.5" rx="1.5"/><rect x="13" y="1" width="6.5" height="6.5" rx="1.5"/><rect x="25" y="1" width="6.5" height="6.5" rx="1.5"/>
<rect x="1" y="13" width="6.5" height="6.5" rx="1.5"/><rect x="13" y="13" width="6.5" height="6.5" rx="1.5"/><rect x="25" y="13" width="6.5" height="6.5" rx="1.5"/>
<rect x="1" y="25" width="6.5" height="6.5" rx="1.5"/><rect x="13" y="25" width="6.5" height="6.5" rx="1.5"/><rect x="25" y="25" width="6.5" height="6.5" rx="1.5"/></g></svg>
<!-- IME bar -->
<div class="a" style="left:1776px;top:987px;width:142px;height:22px;background:#fdfdfd"></div>
<div class="a" style="left:1754px;top:985px;width:25px;height:24px;background:#ef5a24;border-radius:4px;transform:rotate(-14deg)"></div>
<div class="t" style="left:1756px;top:985px;font-size:22px;font-weight:bold;color:#fff;font-style:italic;letter-spacing:-1px">S</div>
<div class="t" style="left:1785px;top:990px;font-size:16px;color:#1e6fc8;font-weight:bold">A</div>
<svg class="a" style="left:1808px;top:991px" width="15" height="14" viewBox="0 0 15 14"><circle cx="8" cy="7" r="6.3" fill="#1e6fc8"/><circle cx="4.6" cy="3.6" r="5.6" fill="#fdfdfd"/></svg>
<div class="t" style="left:1832px;top:986px;font-size:16px;color:#1e6fc8;font-weight:bold">•,</div>
<div class="t" style="left:1853px;top:990px;font-size:15px;color:#1e6fc8;font-weight:bold">简</div>
<div class="t" style="left:1877px;top:990px;font-size:15px;color:#1e6fc8;font-weight:bold">拼</div>
<svg class="a" style="left:1901px;top:991px" width="14" height="14" viewBox="0 0 16 16"><path d="M6.7 0h2.6l.4 2.1 1.5.7 1.8-1.2 1.9 1.9-1.2 1.8.6 1.5 2.1.4v2.6l-2.1.4-.6 1.5 1.2 1.8-1.9 1.9-1.8-1.2-1.5.6-.4 2.2H6.7l-.4-2.2-1.5-.6L3 14.4l-1.9-1.9 1.2-1.8-.6-1.5L0 8.8V6.2l2.1-.4.7-1.5L1.6 2.5 3.5.6l1.8 1.2 1.5-.7z" fill="#1e6fc8"/><circle cx="8" cy="7.7" r="2.7" fill="#fff"/></svg>
<!-- RED ANNOTATION BOXES -->
<div class="a" style="left:734px;top:279px;width:411px;height:371px;border:3.5px solid #ea3219"></div>
<div class="a" style="left:322px;top:662px;width:169px;height:46px;border:3.6px solid #ea3219"></div>
<div class="a" style="left:488px;top:821px;width:42px;height:39px;border:3.4px solid #ea3219"></div>
</body></html>
